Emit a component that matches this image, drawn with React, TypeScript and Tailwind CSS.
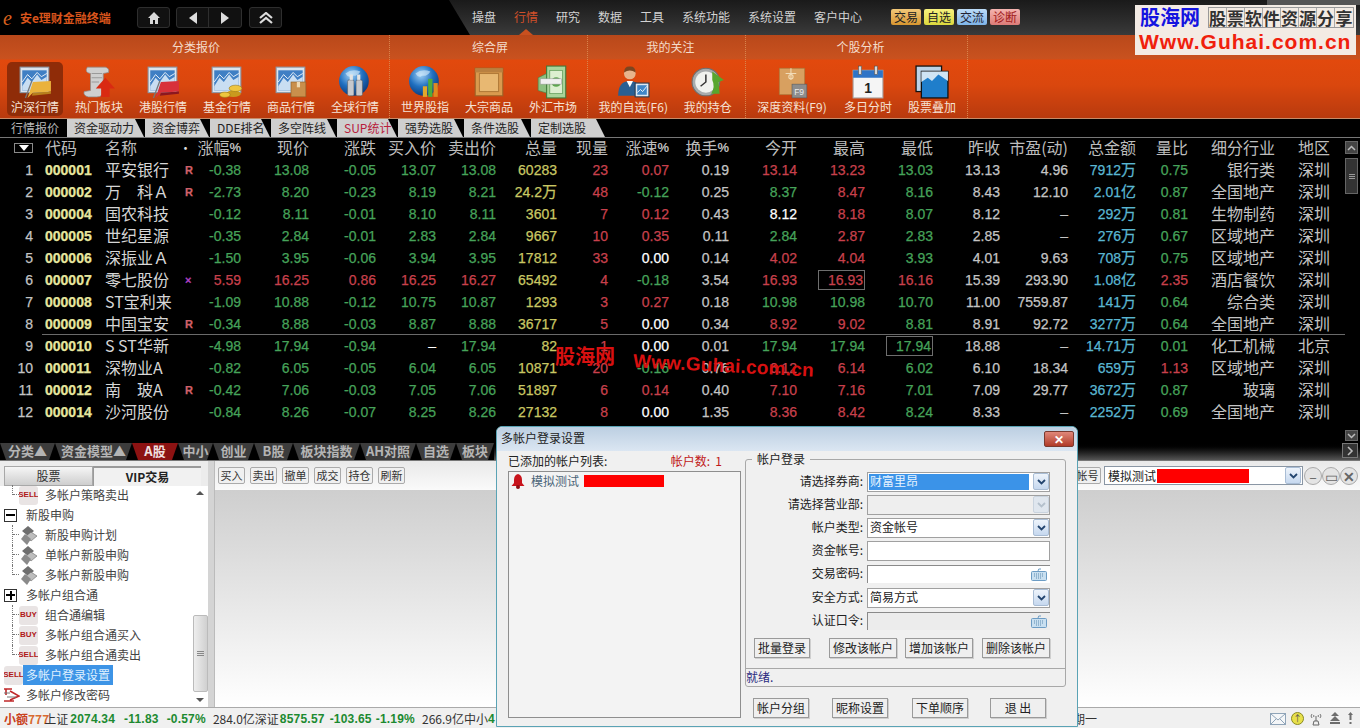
import type { ReactNode } from "react"

const numFont = "font-['Liberation_Sans','Noto_Sans_CJK_SC',sans-serif]"
const cjk = "font-['Noto_Sans_CJK_SC',sans-serif]"
const columns =
  "grid grid-cols-[33px_67px_75px_25px_41px_68px_67px_60px_60px_61px_51px_61px_60px_68px_68px_68px_67px_68px_68px_52px_87px_55px]"

const colours: Record<string, string> = {
  g: "text-[#46a35a]",
  r: "text-[#c8404c]",
  w: "text-white",
  s: "text-[#c4c4c4]",
  y: "text-[#c9c763]",
  c: "text-[#5ab7d2]",
}

// each cell is "colour:value", colour letters are in the map above
const rows = [
  { no: 1, code: "000001", name: "平安银行", mark: "R", ind: "银行类", area: "深圳", cells: ["g:-0.38", "g:13.08", "g:-0.05", "g:13.07", "g:13.08", "y:60283", "r:23", "r:0.07", "s:0.19", "r:13.14", "r:13.23", "g:13.03", "s:13.13", "s:4.96", "c:7912万", "g:0.75"] },
  { no: 2, code: "000002", name: "万　科Ａ", mark: "R", ind: "全国地产", area: "深圳", cells: ["g:-2.73", "g:8.20", "g:-0.23", "g:8.19", "g:8.21", "y:24.2万", "r:48", "g:-0.12", "s:0.25", "g:8.37", "r:8.47", "g:8.16", "s:8.43", "s:12.10", "c:2.01亿", "g:0.87"] },
  { no: 3, code: "000004", name: "国农科技", mark: "", ind: "生物制药", area: "深圳", cells: ["g:-0.12", "g:8.11", "g:-0.01", "g:8.10", "g:8.11", "y:3601", "r:7", "r:0.12", "s:0.43", "w:8.12", "r:8.18", "g:8.07", "s:8.12", "s:–", "c:292万", "g:0.81"] },
  { no: 4, code: "000005", name: "世纪星源", mark: "", ind: "区域地产", area: "深圳", cells: ["g:-0.35", "g:2.84", "g:-0.01", "g:2.83", "g:2.84", "y:9667", "r:10", "r:0.35", "s:0.11", "g:2.84", "r:2.87", "g:2.83", "s:2.85", "s:–", "c:276万", "g:0.67"] },
  { no: 5, code: "000006", name: "深振业Ａ", mark: "", ind: "区域地产", area: "深圳", cells: ["g:-1.50", "g:3.95", "g:-0.06", "g:3.94", "g:3.95", "y:17812", "r:33", "w:0.00", "s:0.14", "r:4.02", "r:4.04", "g:3.93", "s:4.01", "s:9.63", "c:708万", "g:0.75"] },
  { no: 6, code: "000007", name: "零七股份", mark: "×", ind: "酒店餐饮", area: "深圳", cells: ["r:5.59", "r:16.25", "r:0.86", "r:16.25", "r:16.27", "y:65492", "r:4", "g:-0.18", "s:3.54", "r:16.93", "r:16.93", "r:16.16", "s:15.39", "s:293.90", "c:1.08亿", "r:2.35"] },
  { no: 7, code: "000008", name: "ST宝利来", mark: "", ind: "综合类", area: "深圳", cells: ["g:-1.09", "g:10.88", "g:-0.12", "g:10.75", "g:10.87", "y:1293", "r:3", "r:0.27", "s:0.18", "g:10.98", "g:10.98", "g:10.70", "s:11.00", "s:7559.87", "c:141万", "g:0.64"] },
  { no: 8, code: "000009", name: "中国宝安", mark: "R", ind: "全国地产", area: "深圳", cells: ["g:-0.34", "g:8.88", "g:-0.03", "g:8.87", "g:8.88", "y:36717", "r:5", "w:0.00", "s:0.34", "r:8.92", "r:9.02", "g:8.81", "s:8.91", "s:92.72", "c:3277万", "g:0.64"] },
  { no: 9, code: "000010", name: "S ST华新", mark: "", ind: "化工机械", area: "北京", cells: ["g:-4.98", "g:17.94", "g:-0.94", "w:–", "g:17.94", "y:82", "r:1", "w:0.00", "s:0.01", "g:17.94", "g:17.94", "g:17.94", "s:18.88", "s:–", "c:14.71万", "g:0.01"] },
  { no: 10, code: "000011", name: "深物业A", mark: "", ind: "区域地产", area: "深圳", cells: ["g:-0.82", "g:6.05", "g:-0.05", "g:6.04", "g:6.05", "y:10871", "r:20", "g:-0.16", "s:0.76", "r:6.12", "r:6.14", "g:6.02", "s:6.10", "s:18.34", "c:659万", "r:1.13"] },
  { no: 11, code: "000012", name: "南　玻A", mark: "R", ind: "玻璃", area: "深圳", cells: ["g:-0.42", "g:7.06", "g:-0.03", "g:7.05", "g:7.06", "y:51897", "r:6", "r:0.14", "s:0.40", "r:7.10", "r:7.16", "g:7.01", "s:7.09", "s:29.77", "c:3672万", "g:0.87"] },
  { no: 12, code: "000014", name: "沙河股份", mark: "", ind: "全国地产", area: "深圳", cells: ["g:-0.84", "g:8.26", "g:-0.07", "g:8.25", "g:8.26", "y:27132", "r:8", "w:0.00", "s:1.35", "r:8.36", "r:8.42", "g:8.24", "s:8.33", "s:–", "c:2252万", "g:0.69"] },
]

const headers = ["涨幅%", "现价", "涨跌", "买入价", "卖出价", "总量", "现量", "涨速%", "换手%", "今开", "最高", "最低", "昨收", "市盈(动)", "总金额", "量比", "细分行业", "地区"]

function Ico({ children }: { children: ReactNode }) {
  return (
    <svg width="34" height="34" viewBox="0 0 32 32" className="block">
      {children}
    </svg>
  )
}

function ChartBase({ children }: { children?: ReactNode }) {
  return (
    <Ico>
      <rect x="2" y="2" width="27" height="24" fill="#dbe4ee" stroke="#8b98a8" />
      <rect x="4" y="5" width="23" height="19" fill="#3f7fc4" />
      <path d="M4 20 L9 12 L13 16 L18 9 L22 14 L27 11 L27 24 L4 24 Z" fill="#c9def2" />
      <path d="M4 16 L9 9 L13 13 L18 7 L22 11 L27 8" fill="none" stroke="#fff" strokeWidth="0.8" />
      {children}
    </Ico>
  )
}

const Flag = ({ fill, dark }: { fill: string; dark: string }) => (
  <g>
    <path d="M9 31 L14 16 L31 15 L31 25 L14 26 Z" fill={fill} />
    <path d="M14 26 L31 25 L31 27 L13 29 Z" fill={dark} />
    <path d="M7 31 L13 15" stroke="#777" strokeWidth="1.2" />
  </g>
)

const Globe = ({ children }: { children: ReactNode }) => (
  <Ico>
    <defs>
      <radialGradient id="gl" cx="0.4" cy="0.3" r="0.8">
        <stop offset="0" stopColor="#9fd0f5" />
        <stop offset="0.5" stopColor="#1f6fc0" />
        <stop offset="1" stopColor="#0a2f6a" />
      </radialGradient>
    </defs>
    <circle cx="15" cy="15" r="14" fill="url(#gl)" />
    <path d="M7 8 q6 -5 14 -2 q-3 5 -8 4 q-3 3 -6 -2 Z" fill="#dbeefb" opacity="0.6" />
    {children}
  </Ico>
)

const ribbonIcons: Record<string, ReactNode> = {
  hs: <ChartBase><Flag fill="#eab23c" dark="#b77f1c" /></ChartBase>,
  hot: (
    <Ico>
      <path d="M5 2 L22 2 Q26 3 25 7 L20 8 L20 24 Q20 30 14 30 L6 30 Q1 29 2 25 L8 24 L8 8 Q2 7 5 2 Z" fill="#cfcfcf" stroke="#8c8c8c" strokeWidth="0.7" />
      <path d="M9 8 L19 8 M9 12 L19 12 M9 16 L16 16" stroke="#9a9a9a" />
      <path d="M22 12 L31 22 L26 22 L26 30 L18 30 L18 22 L13 22 Z" fill="#d92a12" />
    </Ico>
  ),
  hk: <ChartBase><Flag fill="#d8313a" dark="#8c1720" /></ChartBase>,
  fund: (
    <ChartBase>
      <ellipse cx="22" cy="27" rx="7" ry="3" fill="#c99a1e" />
      <ellipse cx="24" cy="22" rx="6" ry="3" fill="#eec53e" stroke="#8f6d12" strokeWidth="0.5" />
      <ellipse cx="14" cy="28" rx="5" ry="2.5" fill="#eec53e" stroke="#8f6d12" strokeWidth="0.5" />
    </ChartBase>
  ),
  goods: (
    <ChartBase>
      <rect x="16" y="16" width="14" height="14" fill="#c98f4c" stroke="#8e6028" strokeWidth="0.6" />
      <rect x="21.5" y="16" width="3" height="5" fill="#f0d9b0" />
    </ChartBase>
  ),
  world: (
    <Globe>
      <rect x="9" y="14" width="6" height="15" rx="1.5" fill="#c7c9cd" stroke="#555" strokeWidth="0.5" />
      <rect x="17" y="14" width="6" height="15" rx="1.5" fill="#c7c9cd" stroke="#555" strokeWidth="0.5" />
      <rect x="11" y="9" width="3" height="5" fill="#e4e4e4" />
      <rect x="18" y="9" width="3" height="5" fill="#e4e4e4" />
    </Globe>
  ),
  index: (
    <Globe>
      <rect x="14" y="20" width="4" height="10" fill="#e3a82a" />
      <rect x="19" y="13" width="4" height="17" fill="#4eae3c" />
      <rect x="24" y="17" width="4" height="13" fill="#e08a20" />
    </Globe>
  ),
  crate: (
    <Ico>
      <rect x="3" y="3" width="26" height="26" fill="#d99a4e" stroke="#9a6428" />
      <rect x="7" y="8" width="18" height="17" fill="#e8b872" stroke="#b27a38" />
      <rect x="3" y="3" width="26" height="4" fill="#b98040" />
    </Ico>
  ),
  money: (
    <Ico>
      <path d="M2 12 L12 7 L12 27 L2 24 Z" fill="#8cc080" stroke="#4d7d45" strokeWidth="0.6" />
      <rect x="10" y="1" width="18" height="30" fill="#a8d49a" stroke="#3f7a3a" />
      <rect x="13" y="5" width="12" height="22" fill="#dcefd0" stroke="#4f8f48" strokeWidth="0.6" />
      <circle cx="19" cy="16" r="4.5" fill="#5da650" />
      <rect x="4" y="13" width="20" height="5" fill="#f0f0f0" stroke="#999" strokeWidth="0.5" />
    </Ico>
  ),
  person: (
    <Ico>
      <circle cx="13" cy="8" r="5.5" fill="#e7b48c" />
      <path d="M7.5 7 Q8 1 13 1.5 Q18 1 18.5 7 Q13 3.5 7.5 7 Z" fill="#7b4520" />
      <path d="M2 29 Q2 15 13 15 Q24 15 24 29 Z" fill="#2a5f92" />
      <path d="M10 15 L13 21 L16 15 Z" fill="#fff" />
      <rect x="18" y="17" width="13" height="13" fill="#dfe7f0" stroke="#25384f" />
      <rect x="20" y="19" width="9" height="9" fill="#3f86c8" />
      <path d="M20 26 L23 23 L25 25 L29 20" stroke="#fff" fill="none" strokeWidth="0.8" />
    </Ico>
  ),
  clock: (
    <Ico>
      <circle cx="14" cy="16" r="13" fill="#a8acad" stroke="#6d7071" />
      <circle cx="14" cy="16" r="10" fill="#f0f2ee" />
      <path d="M14 9 L14 16 L9 20" stroke="#333" strokeWidth="1.4" fill="none" />
      <path d="M20 6 L31 14 L26 16 L27 27 L19 27 Q23 20 20 14 Z" fill="#58a62e" />
    </Ico>
  ),
  depth: (
    <Ico>
      <rect x="4" y="3" width="24" height="25" fill="#d8a060" stroke="#a67134" strokeWidth="0.6" />
      <path d="M15 3 L15 14 M10 8 L20 8" stroke="#f2dcb8" />
      <circle cx="15" cy="11" r="2" fill="none" stroke="#f2dcb8" />
      <rect x="16" y="18" width="14" height="13" fill="#8d8d8d" stroke="#555" strokeWidth="0.5" />
      <text x="18" y="28" fontSize="8" fill="#eee" fontFamily="Liberation Sans">F9</text>
    </Ico>
  ),
  calendar: (
    <Ico>
      <rect x="2" y="5" width="28" height="26" fill="#f5f5f5" stroke="#aaa" />
      <rect x="2" y="5" width="28" height="7" fill="#2f74c6" />
      <rect x="7" y="1" width="3" height="8" fill="#d8d8d8" stroke="#444" strokeWidth="0.5" />
      <rect x="22" y="1" width="3" height="8" fill="#d8d8d8" stroke="#444" strokeWidth="0.5" />
      <text x="16" y="26" fontSize="13" fontWeight="bold" textAnchor="middle" fill="#222" fontFamily="Liberation Sans">1</text>
    </Ico>
  ),
  stack: (
    <Ico>
      <rect x="1" y="1" width="24" height="24" fill="#bcd2e6" stroke="#111" strokeWidth="1.2" />
      <rect x="6" y="6" width="25" height="25" fill="#1f7ecb" stroke="#111" strokeWidth="1.2" />
      <path d="M6 16 L12 12 L16 15 L22 9 L31 15 L31 6 L6 6 Z" fill="#cfe4f4" />
    </Ico>
  ),
}

const ribbon = [
  {
    title: "分类报价",
    w: "w-[390px] pl-[3px]",
    items: [
      { label: "沪深行情", icon: "hs", w: "w-16", on: true },
      { label: "热门板块", icon: "hot", w: "w-16" },
      { label: "港股行情", icon: "hk", w: "w-16" },
      { label: "基金行情", icon: "fund", w: "w-16" },
      { label: "商品行情", icon: "goods", w: "w-16" },
      { label: "全球行情", icon: "world", w: "w-16" },
    ],
  },
  {
    title: "综合屏",
    w: "w-[198px] pl-[3px]",
    items: [
      { label: "世界股指", icon: "index", w: "w-16" },
      { label: "大宗商品", icon: "crate", w: "w-16" },
      { label: "外汇市场", icon: "money", w: "w-16" },
    ],
  },
  {
    title: "我的关注",
    w: "w-[158px] pl-[8px]",
    items: [
      { label: "我的自选(F6)", icon: "person", w: "w-[76px]" },
      { label: "我的持仓", icon: "clock", w: "w-[76px]" },
    ],
  },
  {
    title: "个股分析",
    w: "w-[222px] pl-[8px]",
    items: [
      { label: "深度资料(F9)", icon: "depth", w: "w-[76px]" },
      { label: "多日分时", icon: "calendar", w: "w-[76px]" },
      { label: "股票叠加", icon: "stack", w: "w-[52px]" },
    ],
  },
]

const topTabs = [
  { label: "资金驱动力", w: "w-[77px]" },
  { label: "资金博弈", w: "w-[64px]" },
  { label: "DDE排名", w: "w-[60px]" },
  { label: "多空阵线", w: "w-[65px]" },
  { label: "SUP统计", w: "w-[60px]", red: true },
  { label: "强势选股", w: "w-[65px]" },
  { label: "条件选股", w: "w-[66px]" },
  { label: "定制选股", w: "w-[74px]" },
]

const bottomTabs = [
  { label: "分类▲", w: "w-[55px]" },
  { label: "资金模型▲", w: "w-[77px]" },
  { label: "A股", w: "w-[46px]", on: true },
  { label: "中小", w: "w-[35px]" },
  { label: "创业", w: "w-[41px]" },
  { label: "B股", w: "w-[39px]" },
  { label: "板块指数", w: "w-[67px]" },
  { label: "AH对照", w: "w-[56px]" },
  { label: "自选", w: "w-[40px]" },
  { label: "板块", w: "w-[38px]" },
]

const treeItems = [
  { level: 2, icon: "sell", label: "多帐户策略卖出", last: true },
  { level: 1, icon: "minus", label: "新股申购" },
  { level: 2, icon: "dia", label: "新股申购计划" },
  { level: 2, icon: "dia", label: "单帐户新股申购" },
  { level: 2, icon: "dia", label: "多帐户新股申购", last: true },
  { level: 1, icon: "plus", label: "多帐户组合通" },
  { level: 2, icon: "buy", label: "组合通编辑" },
  { level: 2, icon: "buy", label: "多帐户组合通买入" },
  { level: 2, icon: "sell", label: "多帐户组合通卖出", last: true },
  { level: 1, icon: "sell", label: "多帐户登录设置", on: true },
  { level: 1, icon: "pwd", label: "多帐户修改密码" },
]

function TreeIcon({ kind }: { kind: string }) {
  if (kind === "sell" || kind === "buy") {
    return (
      <span className="flex h-[19px] w-[19px] shrink-0 items-center justify-center overflow-hidden rounded-[3px] bg-[#e9e4e4] font-['Liberation_Sans_Narrow','Liberation_Sans',sans-serif] text-[8px] leading-none font-bold text-[#b01818]">
        {kind === "sell" ? "SELL" : "BUY"}
      </span>
    )
  }
  if (kind === "dia") {
    return (
      <svg width="19" height="19" viewBox="0 0 19 19" className="shrink-0">
        <path d="M9 0 L15 5 L9 10 L3 5 Z" fill="#6e6e6e" />
        <path d="M12 6 L18 10 L12 15 L7 10 Z" fill="#bdbdbd" stroke="#555" strokeWidth="0.5" />
        <path d="M6 8 L12 13 L8 19 L2 13 Z" fill="#8a8a8a" />
      </svg>
    )
  }
  if (kind === "pwd") {
    return (
      <svg width="16" height="16" viewBox="0 0 16 16" className="shrink-0">
        <path d="M0 2 H8 M0 14 H10 M2 2 V8 M6 4 L15 9 L6 13" stroke="#c0282a" strokeWidth="1.6" fill="none" />
        <path d="M0 6 H6 M3 10 H12" stroke="#777" strokeWidth="1" />
      </svg>
    )
  }
  return (
    <span className="relative flex h-[13px] w-[13px] shrink-0 items-center justify-center border border-[#333] bg-white">
      <span className="h-[2px] w-[9px] bg-black" />
      {kind === "plus" && <span className="absolute h-[9px] w-[2px] bg-black" />}
    </span>
  )
}

function Win({ className, children }: { className: string; children: ReactNode }) {
  return (
    <button className={`flex items-center justify-center border border-[#9a9a9a] bg-[#efefef] text-[12px] text-[#222] shadow-[1px_1px_0_#cfcfcf] ${className}`}>
      {children}
    </button>
  )
}

function Chevron() {
  return (
    <span className="flex h-[17px] w-[16px] shrink-0 items-center justify-center rounded-[2px] border border-[#a9bdd5] bg-linear-to-b from-[#eef4fb] to-[#c6d8ef]">
      <svg width="9" height="6" viewBox="0 0 9 6">
        <path d="M1 1 L4.5 4.5 L8 1" stroke="#23456f" strokeWidth="1.8" fill="none" />
      </svg>
    </span>
  )
}

function Keyboard() {
  return (
    <svg width="16" height="13" viewBox="0 0 16 13" className="mr-[3px]">
      <path d="M7 3 Q7 0 10 1" stroke="#6c9cc4" fill="none" />
      <rect x="0.5" y="3.5" width="15" height="9" rx="1" fill="#c8dff0" stroke="#6c9cc4" />
      <path d="M3 6 H13 M3 8 H13 M5 10 H11" stroke="#5d8bb0" strokeDasharray="1 1" />
    </svg>
  )
}

function FormRow({ label, children }: { label: string; children: ReactNode }) {
  return (
    <div className="flex h-[23.2px] items-center">
      <span className="w-[117px] pb-[2px] text-right text-[12px] text-[#222]">{label}:</span>
      <div className="ml-[4px] w-[183px]">{children}</div>
    </div>
  )
}

function Dialog() {
  const inputBox = "flex h-[20px] items-center border border-[#a0a0a0]"
  return (
    <div className="absolute top-[426px] left-[496px] flex h-[301px] w-[582px] flex-col rounded-t-[6px] border border-[#5aa3b5] bg-[#f0f0f0]">
      <div className="flex h-[24px] shrink-0 items-center justify-between rounded-t-[6px] bg-linear-to-b from-[#bccfe2] to-[#dbe6f2] pr-[3px] pl-[4px] text-[12px] text-[#222]">
        <span className="pb-[2px]">多帐户登录设置</span>
        <span className="flex h-[16px] w-[30px] items-center justify-center rounded-[2px] border border-[#7a3a30] bg-linear-to-b from-[#e0877a] to-[#b03a28] text-[12px] leading-none font-bold text-white">
          ✕
        </span>
      </div>
      <div className="flex flex-1 pl-[11px]">
        <div className="w-[233px]">
          <div className="flex h-[20px] items-end justify-between pb-[1px] text-[12px] text-[#222]">
            <span>已添加的帐户列表:</span>
            <span className="pr-[19px] text-[#c01818]">帐户数:&nbsp;&nbsp;1</span>
          </div>
          <div className="h-[247px] border border-[#8e8e8e] bg-[#f3f3f3] pt-[2px] pl-[2px]">
            <div className="flex h-[14px] items-center text-[12px] text-[#4a6478]">
              <svg width="14" height="15" viewBox="0 0 14 15" className="shrink-0">
                <path d="M7 0 Q11 1 11 6 L11 9 L13.5 12 L0.5 12 L3 9 L3 6 Q3 1 7 0 Z" fill="#c8141c" />
                <circle cx="7" cy="13" r="2" fill="#8f0d12" />
              </svg>
              <span className="ml-[6px]">模拟测试</span>
              <span className="ml-[5px] h-[12px] w-[80px] bg-[#f00]" />
            </div>
          </div>
        </div>
        <div className="ml-[4px] w-[321px]">
          <div className="relative mt-[8px] flex h-[228px] flex-col rounded-[3px] border border-[#a8a8a8] pt-[10px]">
            <span className="absolute -top-[9px] left-[6px] bg-[#f0f0f0] px-[5px] text-[12px] leading-[16px] text-[#222]">帐户登录</span>
            <FormRow label="请选择券商">
              <div className={`${inputBox} justify-between bg-white pl-[1px]`}>
                <span className="flex h-[16px] w-[160px] items-center bg-[#3b93e8] pb-[2px] pl-[1px] text-[12px] text-[#e8f4ff]">财富里昂</span>
                <Chevron />
              </div>
            </FormRow>
            <FormRow label="请选择营业部">
              <div className={`${inputBox} justify-end bg-[#eeeeee]`}>
                <span className="flex h-[17px] w-[16px] items-center justify-center rounded-[2px] border border-[#c9d3de] bg-[#dfe6ee]">
                  <svg width="9" height="6" viewBox="0 0 9 6">
                    <path d="M1 1 L4.5 4.5 L8 1" stroke="#b4c0cc" strokeWidth="1.8" fill="none" />
                  </svg>
                </span>
              </div>
            </FormRow>
            <FormRow label="帐户类型">
              <div className={`${inputBox} justify-between bg-white pl-[2px] text-[12px] text-[#222]`}>
                <span className="pb-[2px]">资金帐号</span>
                <Chevron />
              </div>
            </FormRow>
            <FormRow label="资金帐号">
              <div className={`${inputBox} bg-white`} />
            </FormRow>
            <FormRow label="交易密码">
              <div className="flex h-[18px] items-center justify-end border-t border-l border-[#8a8a8a] bg-white">
                <Keyboard />
              </div>
            </FormRow>
            <FormRow label="安全方式">
              <div className={`${inputBox} justify-between bg-white pl-[2px] text-[12px] text-[#222]`}>
                <span className="pb-[2px]">简易方式</span>
                <Chevron />
              </div>
            </FormRow>
            <FormRow label="认证口令">
              <div className="flex h-[18px] items-center justify-end border-t border-l border-[#8a8a8a] bg-[#ececec]">
                <Keyboard />
              </div>
            </FormRow>
            <div className="mt-[6px] flex pl-[8px]">
              <Win className="h-[20px] w-[56px]">批量登录</Win>
              <Win className="ml-[19px] h-[20px] w-[68px]">修改该帐户</Win>
              <Win className="ml-[8px] h-[20px] w-[68px]">增加该帐户</Win>
              <Win className="ml-[9px] h-[20px] w-[68px]">删除该帐户</Win>
            </div>
            <div className="mt-auto flex h-[18px] items-center border-t border-[#a8a8a8] pb-[2px] text-[12px] text-[#2a2a80]">就绪.</div>
          </div>
          <div className="mt-[11px] flex pl-[8px]">
            <Win className="h-[20px] w-[56px]">帐户分组</Win>
            <Win className="ml-[23px] h-[20px] w-[56px]">昵称设置</Win>
            <Win className="ml-[24px] h-[20px] w-[56px]">下单顺序</Win>
            <Win className="ml-[22px] h-[20px] w-[56px]">退 出</Win>
          </div>
        </div>
      </div>
    </div>
  )
}

function StockCell({ value }: { value: string }) {
  const [c, text] = value.split(":")
  const unit = text.endsWith("万") || text.endsWith("亿")
  if (unit) {
    return (
      <span className={`flex items-center ${colours[c]}`}>
        {text.slice(0, -1)}
        <span className={`${cjk} -mt-[3px] text-[15px] leading-none`}>{text.slice(-1)}</span>
      </span>
    )
  }
  return <span className={colours[c]}>{text}</span>
}

function Quotes() {
  return (
    <div className="flex h-[305px] bg-black">
      <div className="w-[1345px]">
        <div className={`${columns} h-[21px] items-center pb-[3px] text-[16px] leading-none text-[#bdbdbd]`}>
          <span className="flex justify-end pt-[2px] pl-[13px]">
            <span className="flex h-[10px] w-[19px] items-center justify-center border border-[#8a8a8a]">
              <span className="h-0 w-0 border-x-[5px] border-t-[6px] border-x-transparent border-t-white" />
            </span>
          </span>
          <span className="pl-[12px]">代码</span>
          <span className="pl-[5px]">名称</span>
          <span className="pl-[4px] text-[13px] text-[#ddd]">•</span>
          {headers.map((h) => (
            <span key={h} className="flex items-center justify-end whitespace-nowrap">
              {h.endsWith("%") ? (
                <>
                  {h.slice(0, -1)}
                  <span className={`${numFont} text-[13px] font-bold`}>%</span>
                </>
              ) : (
                h
              )}
            </span>
          ))}
        </div>
        {rows.map((r) => (
          <div key={r.no} className={`${columns} relative h-[22px] items-center ${numFont} text-[14px] leading-none whitespace-nowrap [-webkit-text-stroke:0.25px]`}>
            <span className="text-right text-[#c4c4c4]">{r.no}</span>
            <span className="pl-[12px] font-bold text-[#e6e69e]">{r.code}</span>
            <span className={`${cjk} pb-[3px] pl-[5px] text-[16px] leading-none text-[#d6d6d6] [-webkit-text-stroke:0]`}>{r.name}</span>
            <span className={`pl-[10px] text-[11px] font-bold ${r.mark === "R" ? "text-[#d0606a]" : "text-[#b040c0]"}`}>{r.mark}</span>
            {r.cells.map((cell, i) => {
              const boxed = (r.no === 6 && i === 10) || (r.no === 9 && i === 11)
              return (
                <span key={i} className="flex items-center justify-end">
                  {boxed ? (
                    <span className="flex h-[20px] w-[47px] items-center justify-end border border-[#6e6e6e] pr-[1px]">
                      <StockCell value={cell} />
                    </span>
                  ) : (
                    <StockCell value={cell} />
                  )}
                </span>
              )
            })}
            <span className={`${cjk} pb-[3px] text-right text-[16px] leading-none text-[#c4c4c4] [-webkit-text-stroke:0]`}>{r.ind}</span>
            <span className={`${cjk} pb-[3px] text-right text-[16px] leading-none text-[#c4c4c4] [-webkit-text-stroke:0]`}>{r.area}</span>
            {r.no === 8 && <div className="absolute right-0 bottom-0 left-[42px] h-px bg-[#6a6a6a]" />}
          </div>
        ))}
      </div>
      <div className="flex w-[13px] flex-col items-center justify-between pt-[3px] pb-[2px]">
        <div className="flex flex-col gap-[4px]">
          <span className="flex h-[13px] w-[13px] items-center justify-center border border-[#666] bg-[#444]">
            <svg width="9" height="6" viewBox="0 0 9 6">
              <path d="M1 5 L4.5 1.5 L8 5" stroke="#bbb" strokeWidth="1.5" fill="none" />
            </svg>
          </span>
          <span className="flex h-[36px] w-[13px] flex-col items-center justify-center gap-[1px] border border-[#666] bg-[#333]">
            <span className="h-px w-[6px] bg-[#999]" />
            <span className="h-px w-[6px] bg-[#999]" />
            <span className="h-px w-[6px] bg-[#999]" />
          </span>
        </div>
        <span className="flex h-[11px] w-[13px] items-center justify-center border border-[#666] bg-[#444]">
          <svg width="9" height="6" viewBox="0 0 9 6">
            <path d="M1 1 L4.5 4.5 L8 1" stroke="#bbb" strokeWidth="1.5" fill="none" />
          </svg>
        </span>
      </div>
    </div>
  )
}

export default function App() {
  return (
    <div className={`relative h-[728px] w-[1360px] overflow-hidden bg-black ${cjk}`}>
      {/* top bar */}
      <div className="flex h-[35px] items-center bg-black">
        <div className="flex w-[137px] items-center pl-[3px] font-bold">
          <span className="font-['Liberation_Serif',serif] text-[20px] leading-none font-normal text-[#d8601e] italic">e</span>
          <span className="ml-[8px] text-[12px] leading-none whitespace-nowrap text-[#d8541c]">安e理财金融终端</span>
        </div>
        <span className="flex h-[21px] w-[33px] items-center justify-center rounded-[3px] border border-[#2e2e2e] bg-[#111]">
          <svg width="14" height="14" viewBox="0 0 14 14">
            <path d="M7 1 L13 7 L11 7 L11 13 L8 13 L8 9 L6 9 L6 13 L3 13 L3 7 L1 7 Z" fill="#d8d8d8" />
          </svg>
        </span>
        <span className="ml-[6px] flex h-[21px] w-[66px] items-center rounded-[3px] border border-[#2e2e2e] bg-[#111]">
          <span className="flex h-full w-1/2 items-center justify-center border-r border-[#2e2e2e]">
            <span className="h-0 w-0 border-y-[6px] border-r-[8px] border-y-transparent border-r-[#ddd]" />
          </span>
          <span className="flex h-full w-1/2 items-center justify-center">
            <span className="h-0 w-0 border-y-[6px] border-l-[8px] border-y-transparent border-l-[#ddd]" />
          </span>
        </span>
        <span className="ml-[7px] flex h-[21px] w-[33px] items-center justify-center rounded-[3px] border border-[#2e2e2e] bg-[#111]">
          <svg width="14" height="12" viewBox="0 0 14 12">
            <path d="M1 6 L7 1 L13 6 M1 11 L7 6 L13 11" stroke="#ddd" strokeWidth="2.2" fill="none" />
          </svg>
        </span>
        <div className="ml-[167px] flex h-full flex-1 items-center gap-[18px] bg-linear-to-b from-[#1a1a1a] to-[#3a3a3a] pb-[1px] pl-[23px] text-[12px] text-[#d2d2d2] [clip-path:polygon(0_0,100%_0,100%_100%,21px_100%)]">
          <span>操盘</span>
          <span className="relative flex h-full items-center text-[#d0502a]">
            行情
            <span className="absolute -bottom-[1px] left-[5px] h-0 w-0 border-x-[7px] border-b-[6px] border-x-transparent border-b-[#c9501f]" />
          </span>
          <span>研究</span>
          <span>数据</span>
          <span>工具</span>
          <span>系统功能</span>
          <span>系统设置</span>
          <span>客户中心</span>
          <div className="ml-[11px] flex gap-[3px] text-[12px]">
            <span className="flex h-[16px] w-[30px] items-center justify-center rounded-[2px] bg-linear-to-b from-[#f2c878] to-[#d8962e] text-[#222]">交易</span>
            <span className="flex h-[16px] w-[30px] items-center justify-center rounded-[2px] bg-linear-to-b from-[#f8f27e] to-[#dcd83c] text-[#222]">自选</span>
            <span className="flex h-[16px] w-[30px] items-center justify-center rounded-[2px] bg-linear-to-b from-[#bcdcf8] to-[#7eb4e8] text-[#223]">交流</span>
            <span className="flex h-[16px] w-[30px] items-center justify-center rounded-[2px] bg-linear-to-b from-[#f4b4b0] to-[#dc7c78] text-[#a01818]">诊断</span>
          </div>
        </div>
      </div>

      {/* ribbon */}
      <div className="flex h-[84px] border-b border-[#c78b68] bg-[linear-gradient(#b9481a_0%,#c9521f_29%,#e2490d_30%,#da470e_60%,#b83a0e_100%)]">
        {ribbon.map((group) => (
          <div key={group.title} className={`flex flex-col border-r border-dotted border-[#d8844c] ${group.w}`}>
            <div className="flex h-[25px] items-center justify-center pb-[2px] text-[12px] text-[#f4dccb]">{group.title}</div>
            <div className="flex flex-1">
              {group.items.map((item) => (
                <div key={item.label} className={`relative flex flex-col items-center ${item.w}`}>
                  {"on" in item && item.on && <div className="absolute top-[2px] left-[4px] h-[54px] w-[56px] rounded-[5px] bg-[#8f2c08]" />}
                  <div className="relative mt-[5px] h-[34px]">{ribbonIcons[item.icon]}</div>
                  <span className="relative -mt-[1px] text-[12px] leading-[18px] whitespace-nowrap text-[#f6e2d4]">{item.label}</span>
                </div>
              ))}
            </div>
          </div>
        ))}
      </div>

      {/* page tabs */}
      <div className="flex h-[19px] items-end border-b border-[#777] bg-black text-[12px] leading-none">
        <div className="flex h-full w-[67px] items-center pl-[11px] text-[#b8b8b8]">行情报价</div>
        <div className="flex h-full gap-[1px]">
          {topTabs.map((t) => (
            <div
              key={t.label}
              className={`flex h-full items-center bg-[#cfcfcf] pl-[7px] [clip-path:polygon(0_0,calc(100%-9px)_0,100%_100%,0_100%)] ${t.w} ${t.red ? "text-[#b8203c]" : "text-[#222]"}`}
            >
              {t.label}
            </div>
          ))}
        </div>
      </div>

      <Quotes />

      {/* market tabs */}
      <div className="flex h-[18px] border-b border-[#777] bg-black">
        {bottomTabs.map((t) => (
          <div
            key={t.label}
            className={`flex h-full items-center justify-center pb-[2px] text-[13px] leading-none font-bold whitespace-nowrap [clip-path:polygon(0_0,100%_0,calc(100%-6px)_100%,6px_100%)] ${t.w} ${t.on ? "bg-[#8c1212] text-[#f0e0e0]" : "bg-[#3c3c3c] text-[#b4b4b4]"}`}
          >
            {t.label}
          </div>
        ))}
        <div className="flex flex-1 justify-end bg-linear-to-b from-black to-[#555] pr-[2px]">
          <span className="flex h-[15px] w-[16px] items-center justify-center border border-[#777] bg-[#333]">
            <svg width="7" height="10" viewBox="0 0 7 10">
              <path d="M1 1 L5 5 L1 9" stroke="#bbb" strokeWidth="1.6" fill="none" />
            </svg>
          </span>
        </div>
      </div>

      {/* trade panel */}
      <div className="flex h-[246px] bg-[#f0f0f0]">
        <div className="flex w-[214px] shrink-0 flex-col bg-[#d4d4d4] pr-[6px]">
          <div className="flex h-[25px] shrink-0 items-end bg-[#ececec] pl-[4px] text-[12px] text-[#333]">
            <span className="flex h-[20px] w-[89px] items-center justify-center border border-[#a8a8a8] bg-linear-to-b from-[#f6f6f6] to-[#cecece]">股票</span>
            <span className="flex h-[20px] w-[108px] items-center justify-center border-t-2 border-l border-[#9a9a9a] bg-[#f1f1f1] font-bold text-[#222]">VIP交易</span>
          </div>
          <div className="flex min-h-0 flex-1 bg-white">
            <div className="-mt-[1px] min-w-0 flex-1 pl-[4px]">
              {treeItems.map((item) => (
                <div key={item.label} className="flex h-[20px] items-center text-[12px] whitespace-nowrap text-[#444]">
                  {item.level === 2 && (
                    <div className={`ml-[8px] w-[7px] border-l border-dotted border-[#777] ${item.last ? "h-[10px] self-start" : "self-stretch"}`}>
                      <div className="h-[10px] border-b border-dotted border-[#777]" />
                    </div>
                  )}
                  <TreeIcon kind={item.icon} />
                  <span className={item.level === 2 ? "ml-[4px]" : item.icon === "pwd" ? "ml-[3px]" : item.icon === "sell" ? "ml-[0px]" : "ml-[6px]"}>
                    <span className={item.on ? "inline-block bg-[#3d94e6] px-[3px] leading-[20px] text-[#dff0ff]" : "inline-block px-[3px] leading-[20px]"}>{item.label}</span>
                  </span>
                </div>
              ))}
            </div>
            <div className="flex w-[16px] shrink-0 flex-col items-center justify-between bg-white pt-[5px] pb-[5px]">
              <span className="h-0 w-0 border-x-[4px] border-b-[4px] border-x-transparent border-b-[#555]" />
              <div className="mt-auto mb-[6px] flex h-[77px] w-[15px] flex-col items-center justify-center gap-[1px] rounded-[2px] border border-[#bbb] bg-linear-to-r from-[#eee] to-[#d0d0d0]">
                <span className="h-px w-[7px] bg-[#888]" />
                <span className="h-px w-[7px] bg-[#888]" />
                <span className="h-px w-[7px] bg-[#888]" />
              </div>
              <span className="h-0 w-0 border-x-[4px] border-t-[4px] border-x-transparent border-t-[#555]" />
            </div>
          </div>
        </div>
        <div className="flex min-w-0 flex-1 flex-col border-l border-[#bbb] bg-linear-to-b from-[#c8c8c8] to-white">
          <div className="flex h-[29px] shrink-0 items-center justify-between bg-linear-to-b from-[#e9e9e9] to-[#fafafa] pr-[2px] pl-[3px]">
            <div className="flex gap-[5px]">
              {["买入", "卖出", "撤单", "成交", "持仓", "刷新"].map((b) => (
                <span key={b} className="flex h-[17px] w-[27px] items-center justify-center rounded-[2px] border border-[#aaa] bg-[#f0f0f0] text-[11px] leading-none text-[#333]">
                  {b}
                </span>
              ))}
            </div>
            <div className="flex items-center">
              <span className="flex h-[17px] w-[27px] items-center justify-center rounded-[2px] border border-[#aaa] bg-[#f0f0f0] text-[11px] leading-none text-[#333]">帐号</span>
              <span className="ml-[3px] flex h-[19px] w-[199px] items-center border border-[#8a96a4] bg-white pr-[1px] pl-[3px] text-[12px] text-[#222]">
                模拟测试
                <span className="ml-px h-[14px] w-[92px] bg-[#f00]" />
                <span className="ml-auto">
                  <Chevron />
                </span>
              </span>
              <div className="ml-[1px] flex text-[14px] leading-none text-[#666]">
                <span className="flex h-[18px] w-[18px] items-center justify-center rounded-full border border-[#aaa] bg-[#e4e4e4]">–</span>
                <span className="flex h-[18px] w-[18px] items-center justify-center rounded-full border border-[#aaa] bg-[#e4e4e4]">▭</span>
                <span className="flex h-[18px] w-[18px] items-center justify-center rounded-full border border-[#aaa] bg-[#e4e4e4] font-bold">✕</span>
              </div>
            </div>
          </div>
        </div>
      </div>

      {/* status bar */}
      <div className="flex h-[22px] items-center border-t border-[#aaa] bg-[#f0f0f0] pl-[4px] text-[12px] whitespace-nowrap text-[#333]">
        <div className="flex w-[1057px] items-center overflow-hidden">
          <span className="font-bold text-[#c8401c]">小额</span>
          <span className="font-bold text-[#d86a30]">777</span>
          <span className="-ml-[5px]">上证</span>
          <span className={`${numFont} ml-[2px] font-bold tracking-[0.2px] text-[#1c8a30]`}>2074.34</span>
          <span className={`${numFont} ml-[9px] font-bold tracking-[0.2px] text-[#1c8a30]`}>-11.83</span>
          <span className={`${numFont} ml-[8px] font-bold tracking-[0.2px] text-[#1c8a30]`}>-0.57%</span>
          <span className="ml-[7px]">284.0亿深证</span>
          <span className={`${numFont} ml-[1px] font-bold tracking-[0.2px] text-[#1c8a30]`}>8575.57</span>
          <span className={`${numFont} ml-[5px] font-bold tracking-[0.2px] text-[#1c8a30]`}>-103.65</span>
          <span className={`${numFont} ml-[4px] font-bold tracking-[0.2px] text-[#1c8a30]`}>-1.19%</span>
          <span className="ml-[7px]">266.9亿中小</span>
          <span className={`${numFont} font-bold text-[#1c8a30]`}>4</span>
        </div>
        <span>星期一</span>
        <div className="ml-auto flex items-center gap-[5px] pr-[7px]">
          <svg width="16" height="12" viewBox="0 0 16 12">
            <rect x="0.5" y="0.5" width="15" height="11" fill="#f4f6f8" stroke="#8fa4b8" />
            <path d="M1 1 L8 7 L15 1 M1 11 L6 6 M15 11 L10 6" stroke="#8fa4b8" fill="none" />
          </svg>
          <span className="flex h-[13px] w-[13px] items-center justify-center rounded-full border border-[#8a8a20] bg-[#e8e04a] text-[9px] leading-none text-[#555]">↑</span>
          <svg width="12" height="14" viewBox="0 0 12 14" className="ml-[1px]">
            <path d="M2 2 Q0 4 2 6 M10 2 Q12 4 10 6 M4 3 Q3 4 4 5 M8 3 Q9 4 8 5" stroke="#777" fill="none" />
            <path d="M6 4 L6 9 M3 13 L4 9 L8 9 L9 13 Z" stroke="#666" fill="none" />
          </svg>
          <svg width="10" height="13" viewBox="0 0 10 13" className="ml-[3px]">
            <path d="M5 0 L9 4 L1 4 Z M5 4 L10 9 L0 9 Z" fill="#6d6d6d" />
            <rect x="0" y="10" width="10" height="2" fill="#6d6d6d" />
          </svg>
          <svg width="5" height="13" viewBox="0 0 5 13" className="ml-[3px]">
            <path d="M2.5 0 L5 3 L3.5 3 L3.5 8 L1.5 8 L1.5 3 L0 3 Z" fill="#6d6d6d" />
            <rect x="1.5" y="10" width="2" height="2" fill="#6d6d6d" />
          </svg>
        </div>
      </div>

      {/* window buttons, mostly behind the watermark */}
      <div className="absolute top-0 right-0 flex h-[5px] w-[93px] bg-[#555]" />

      {/* watermarks pasted on the screenshot */}
      <div className="absolute top-[5px] left-[1135px] h-[50px] w-[221px] bg-[#f3ebe4]">
        <div className="flex h-[25px] items-center pl-[5px]">
          <span className="pb-[2px] text-[20px] leading-none font-bold text-[#1414e0]">股海网</span>
          <span className="ml-[8px] flex border border-[#999] text-[17px] leading-[19px] font-bold text-[#333]">
            {"股票软件资源分享".split("").map((c, i) => (
              <span key={i} className="w-[18px] border-r border-[#aaa] text-center last:border-r-0">
                {c}
              </span>
            ))}
          </span>
        </div>
        <div className="pl-[4px] font-['Liberation_Sans',sans-serif] text-[21px] leading-[23px] font-bold tracking-[1px] text-[#f0200c]">Www.Guhai.com.cn</div>
      </div>
      <div className="absolute top-[346px] left-[555px] text-[20px] leading-none font-bold text-[#d81010]">股海网</div>
      <div className="absolute top-[356px] left-[633px] rotate-[3deg] font-['Liberation_Sans',sans-serif] text-[19px] leading-none font-bold tracking-[0.2px] text-[#d81010]">Www.Guhai.com.cn</div>

      <Dialog />
    </div>
  )
}
